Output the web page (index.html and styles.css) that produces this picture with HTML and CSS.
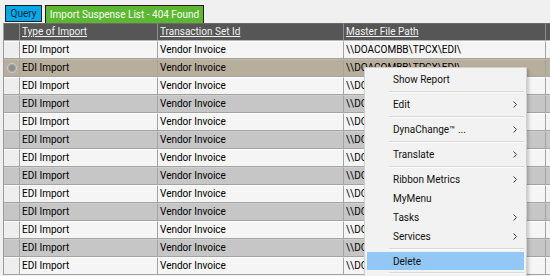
FILE: index.html
```html
<!DOCTYPE html>
<html>
<head>
<meta charset="utf-8">
<link rel="stylesheet" href="styles.css">
</head>
<body>
<div class="tabs">
  <div class="tab tab-query">Query</div>
  <div class="tab tab-list">Import Suspense List - 404 Found</div>
</div>
<div class="grid">
  <div class="row head">
    <div class="cell rh"></div>
    <div class="cell"><u>Type of Import</u></div>
    <div class="cell"><u>Transaction Set Id</u></div>
    <div class="cell"><u>Master File Path</u></div>
    <div class="cell last"></div>
  </div>
  <div class="row light">
    <div class="cell rh"></div><div class="cell">EDI Import</div><div class="cell">Vendor Invoice</div><div class="cell">\\DOACOMBB\TPCX\EDI\</div><div class="cell last"></div>
  </div>
  <div class="row sel">
    <div class="cell rh"><span class="radio"></span></div><div class="cell">EDI Import</div><div class="cell">Vendor Invoice</div><div class="cell">\\DOACOMBB\TPCX\EDI\</div><div class="cell last"></div>
  </div>
  <div class="row light">
    <div class="cell rh"></div><div class="cell">EDI Import</div><div class="cell">Vendor Invoice</div><div class="cell">\\DOACOMBB\TPCX\EDI\</div><div class="cell last"></div>
  </div>
  <div class="row dark">
    <div class="cell rh"></div><div class="cell">EDI Import</div><div class="cell">Vendor Invoice</div><div class="cell">\\DOACOMBB\TPCX\EDI\</div><div class="cell last"></div>
  </div>
  <div class="row light">
    <div class="cell rh"></div><div class="cell">EDI Import</div><div class="cell">Vendor Invoice</div><div class="cell">\\DOACOMBB\TPCX\EDI\</div><div class="cell last"></div>
  </div>
  <div class="row dark">
    <div class="cell rh"></div><div class="cell">EDI Import</div><div class="cell">Vendor Invoice</div><div class="cell">\\DOACOMBB\TPCX\EDI\</div><div class="cell last"></div>
  </div>
  <div class="row light">
    <div class="cell rh"></div><div class="cell">EDI Import</div><div class="cell">Vendor Invoice</div><div class="cell">\\DOACOMBB\TPCX\EDI\</div><div class="cell last"></div>
  </div>
  <div class="row dark">
    <div class="cell rh"></div><div class="cell">EDI Import</div><div class="cell">Vendor Invoice</div><div class="cell">\\DOACOMBB\TPCX\EDI\</div><div class="cell last"></div>
  </div>
  <div class="row light">
    <div class="cell rh"></div><div class="cell">EDI Import</div><div class="cell">Vendor Invoice</div><div class="cell">\\DOACOMBB\TPCX\EDI\</div><div class="cell last"></div>
  </div>
  <div class="row dark">
    <div class="cell rh"></div><div class="cell">EDI Import</div><div class="cell">Vendor Invoice</div><div class="cell">\\DOACOMBB\TPCX\EDI\</div><div class="cell last"></div>
  </div>
  <div class="row light">
    <div class="cell rh"></div><div class="cell">EDI Import</div><div class="cell">Vendor Invoice</div><div class="cell">\\DOACOMBB\TPCX\EDI\</div><div class="cell last"></div>
  </div>
  <div class="row dark">
    <div class="cell rh"></div><div class="cell">EDI Import</div><div class="cell">Vendor Invoice</div><div class="cell">\\DOACOMBB\TPCX\EDI\</div><div class="cell last"></div>
  </div>
  <div class="row light">
    <div class="cell rh"></div><div class="cell">EDI Import</div><div class="cell">Vendor Invoice</div><div class="cell">\\DOACOMBB\TPCX\EDI\</div><div class="cell last"></div>
  </div>
</div>

<div class="menu">
  <div class="item">Show Report</div>
  <div class="sep"></div>
  <div class="item">Edit<svg class="chev" viewBox="0 0 4 7"><polyline points="0.5,0.5 3.5,3.5 0.5,6.5"/></svg></div>
  <div class="sep"></div>
  <div class="item">DynaChange™ ...<svg class="chev" viewBox="0 0 4 7"><polyline points="0.5,0.5 3.5,3.5 0.5,6.5"/></svg></div>
  <div class="sep"></div>
  <div class="item">Translate<svg class="chev" viewBox="0 0 4 7"><polyline points="0.5,0.5 3.5,3.5 0.5,6.5"/></svg></div>
  <div class="sep"></div>
  <div class="item">Ribbon Metrics<svg class="chev" viewBox="0 0 4 7"><polyline points="0.5,0.5 3.5,3.5 0.5,6.5"/></svg></div>
  <div class="item">MyMenu</div>
  <div class="item">Tasks<svg class="chev" viewBox="0 0 4 7"><polyline points="0.5,0.5 3.5,3.5 0.5,6.5"/></svg></div>
  <div class="item">Services<svg class="chev" viewBox="0 0 4 7"><polyline points="0.5,0.5 3.5,3.5 0.5,6.5"/></svg></div>
  <div class="sep"></div>
  <div class="item hover">Delete</div>
  <div class="sep"></div>
</div>
</body>
</html>
```
FILE: styles.css
```css
html, body {
  margin: 0;
  padding: 0;
  background: #f0f0f0;
  font-family: Roboto, "Liberation Sans", sans-serif;
  font-size: 10px;
  color: #000;
  overflow: hidden;
  height: 276px;
}

.tabs {
  display: flex;
  align-items: flex-start;
  gap: 3px;
  padding: 5px 0 0 5px;
  height: 18px;
}

.tab {
  box-sizing: border-box;
  border: 1px solid #1e1e1e;
  display: flex;
  align-items: center;
  justify-content: center;
  white-space: nowrap;
}

.tab-query {
  width: 37px;
  height: 17px;
  background: #02a9e6;
  color: #10223e;
}

.tab-list {
  width: 159px;
  height: 18px;
  border-bottom: none;
  background: #5db732;
  color: #f4fff0;
}

.grid {
  margin-left: 3px;
  border-left: 1px solid #9a9a9a;
}

.row {
  display: grid;
  grid-template-columns: 16px 138px 186px 202px 1fr;
  height: 18px;
}

.cell {
  box-sizing: border-box;
  height: 18px;
  border-right: 1px solid #a3a3a3;
  border-bottom: 1px solid #a3a3a3;
  border-top: 1px solid transparent;
  padding-left: 2px;
  line-height: 16px;
  white-space: nowrap;
  overflow: hidden;
}

.head .cell {
  background: #565656;
  color: #f2f2f2;
  border-right-color: #8c8c8c;
  border-bottom-color: #b8b8b8;
  border-top-color: #6a6a6a;
}

.head u {
  text-decoration-thickness: 1px;
  text-underline-offset: 1px;
}

.light .cell {
  background: #f5f5f5;
  border-top-color: #ffffff;
}

.light .cell.rh {
  background: #eeeeee;
}

.dark .cell {
  background: #c6c6c6;
  border-top-color: #cfcfcf;
}

.sel .cell {
  background: #b8ae9c;
  border-top-color: #c2b9a8;
}

.cell.last {
  border-right: none;
}

.rh {
  display: flex;
  align-items: center;
  justify-content: center;
  padding-left: 0;
}

.radio {
  width: 8px;
  height: 8px;
  border-radius: 50%;
  background: radial-gradient(circle, #8f8f8f 0 2.5px, #a9a9a9 3.5px);
  box-shadow: 0 0 0 1px #d0cbc0;
}

.menu {
  position: absolute;
  left: 364px;
  top: 67px;
  width: 163px;
  height: 220px;
  box-sizing: border-box;
  background: #f2f2f2;
  border: 1px solid #cfcfcf;
  box-shadow: 2px 2px 3px rgba(0, 0, 0, 0.18);
  padding: 2px 2px 0 2px;
}

.item {
  height: 19px;
  display: flex;
  align-items: center;
  justify-content: space-between;
  padding: 0 7px 0 26px;
  color: #111;
  font-size: 10px;
}

.item.hover {
  background: #93c8f6;
  height: 18px;
}

.chev {
  width: 4px;
  height: 7px;
  fill: none;
  stroke: #3a3a3a;
  stroke-width: 1;
}

.sep {
  height: 6px;
  margin-left: 22px;
  position: relative;
}

.sep::after {
  content: "";
  display: block;
  position: absolute;
  left: 0;
  right: 0;
  top: 2px;
  height: 1px;
  background: #d9d9d9;
  border-bottom: 1px solid #fbfbfb;
}
```
